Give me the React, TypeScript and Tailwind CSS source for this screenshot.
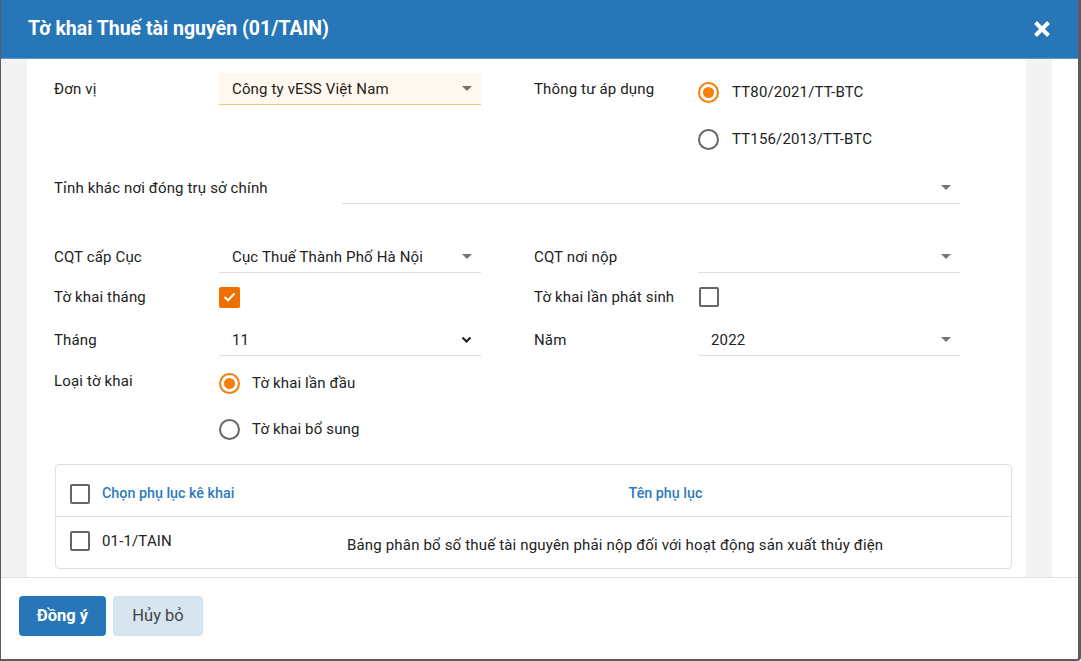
import React from "react";

const Caret = () => (
  <svg width="10" height="6" viewBox="0 0 10 6" className="shrink-0">
    <path d="M0 0 L10 0 L5 5 Z" fill="#757575" />
  </svg>
);

const Chevron = () => (
  <svg width="11" height="8" viewBox="0 0 11 8" className="shrink-0">
    <path d="M1.5 1.5 L5.5 5.5 L9.5 1.5" stroke="#222" strokeWidth="2.2" fill="none" />
  </svg>
);

const Radio = ({ checked }: { checked?: boolean }) => (
  <span
    className={`flex h-[21px] w-[21px] shrink-0 items-center justify-center rounded-full border-2 ${
      checked ? "border-[#f57f0a]" : "border-[#666]"
    }`}
  >
    {checked && <span className="h-[11px] w-[11px] rounded-full bg-[#f57f0a]" />}
  </span>
);

const Checkbox = ({ checked }: { checked?: boolean }) =>
  checked ? (
    <span className="flex h-[21px] w-[21px] shrink-0 items-center justify-center rounded-[2px] bg-[#ef7000]">
      <svg width="13" height="10" viewBox="0 0 13 10">
        <path d="M1.5 5 L5 8.3 L11.5 1.5" stroke="white" strokeWidth="2" fill="none" />
      </svg>
    </span>
  ) : (
    <span className="h-[20px] w-[20px] shrink-0 rounded-[2px] border-2 border-[#666]" />
  );

const Select = ({
  value,
  w = "w-[262px]",
  chevron,
  active,
}: {
  value?: string;
  w?: string;
  chevron?: boolean;
  active?: boolean;
}) => (
  <div
    className={`flex h-[32px] ${w} items-center justify-between border-b pl-[13px] pr-[9px] ${
      active ? "border-[#f5c880] bg-[#fff8ef]" : "border-[#dedede]"
    }`}
  >
    <span className="mt-[2px]">{value}</span>
    {chevron ? <Chevron /> : <Caret />}
  </div>
);

export default function App() {
  return (
    <div
      className="flex h-[661px] w-[1081px] flex-col overflow-hidden rounded-br-[4px] border-b-2 border-l border-r-[3px] border-[#5c5c5c] bg-white text-[15px] tracking-[0.15px] text-[#222]"
      style={{ fontFamily: "Roboto, 'Noto Sans', sans-serif" }}
    >
      {/* Header */}
      <div className="flex h-[59px] shrink-0 items-center justify-between border-b border-[#5a9bd0] bg-[#2776b7] pl-[27px] pr-[27px]">
        <h1 className="text-[19.5px] font-bold tracking-normal text-white">Tờ khai Thuế tài nguyên (01/TAIN)</h1>
        <svg width="18" height="18" viewBox="0 0 18 18">
          <path d="M2.5 2.5 L15.5 15.5 M15.5 2.5 L2.5 15.5" stroke="white" strokeWidth="4" strokeLinecap="butt" />
        </svg>
      </div>

      {/* Body */}
      <div className="flex h-[519px] shrink-0 border-b border-[#e2e2e2]">
        <div className="w-[26px] shrink-0 bg-[#f3f3f3]" />
        <div className="flex-1 overflow-hidden rounded-t-[4px] bg-white pt-[14px]">
          {/* Row 1 */}
          <div className="flex pl-[27px]">
            <div className="flex h-[32px] w-[165px] items-center pt-[1px]">Đơn vị</div>
            <Select value="Công ty vESS Việt Nam" active />
            <div className="ml-[53px] flex h-[32px] w-[164px] items-center pt-[1px]">Thông tư áp dụng</div>
            <div className="flex flex-col gap-[9px]">
              <div className="flex h-[38px] items-center gap-[13px]">
                <Radio checked />
                <span>TT80/2021/TT-BTC</span>
              </div>
              <div className="flex h-[38px] items-center gap-[13px]">
                <Radio />
                <span>TT156/2013/TT-BTC</span>
              </div>
            </div>
          </div>

          {/* Row 2 */}
          <div className="mt-[14px] flex pl-[27px]">
            <div className="flex h-[32px] w-[288px] items-center">Tỉnh khác nơi đóng trụ sở chính</div>
            <Select w="w-[618px]" />
          </div>

          {/* Row 3 */}
          <div className="mt-[37px] flex pl-[27px]">
            <div className="flex h-[32px] w-[165px] items-center">CQT cấp Cục</div>
            <Select value="Cục Thuế Thành Phố Hà Nội" />
            <div className="ml-[53px] flex h-[32px] w-[164px] items-center">CQT nơi nộp</div>
            <Select />
          </div>

          {/* Row 4 */}
          <div className="mt-[8px] flex h-[32px] items-center pl-[27px]">
            <div className="w-[165px]">Tờ khai tháng</div>
            <div className="flex w-[262px] items-center">
              <Checkbox checked />
            </div>
            <div className="ml-[53px] w-[165px]">Tờ khai lần phát sinh</div>
            <Checkbox />
          </div>

          {/* Row 5 */}
          <div className="mt-[11px] flex pl-[27px]">
            <div className="flex h-[32px] w-[165px] items-center">Tháng</div>
            <Select value="11" chevron />
            <div className="ml-[53px] flex h-[32px] w-[164px] items-center">Năm</div>
            <Select value="2022" />
          </div>

          {/* Row 6 */}
          <div className="mt-[8px] flex pl-[27px]">
            <div className="flex h-[34px] w-[165px] items-center">Loại tờ khai</div>
            <div className="flex flex-col gap-[8px]">
              <div className="flex h-[38px] items-center gap-[12px]">
                <Radio checked />
                <span>Tờ khai lần đầu</span>
              </div>
              <div className="flex h-[38px] items-center gap-[12px]">
                <Radio />
                <span>Tờ khai bổ sung</span>
              </div>
            </div>
          </div>

          {/* Table */}
          <div className="ml-[28px] mt-[16px] w-[957px] rounded-[4px] border border-[#e0e0e0]">
            <div className="flex h-[52px] items-center border-b border-[#e0e0e0] pt-[6px]">
              <div className="flex w-[264px] items-center gap-[12px] pl-[14px]">
                <Checkbox />
                <span className="text-[14.3px] font-medium tracking-normal text-[#2d7bbd]">Chọn phụ lục kê khai</span>
              </div>
              <div className="flex-1 text-center text-[14.3px] font-medium tracking-normal text-[#2d7bbd]">Tên phụ lục</div>
            </div>
            <div className="flex h-[51px] items-start pt-[13px]">
              <div className="flex w-[264px] items-center gap-[12px] pl-[14px]">
                <Checkbox />
                <span>01-1/TAIN</span>
              </div>
              <div className="pl-[27px] pt-[4px] text-[15px] tracking-[0.17px]">
                Bảng phân bổ số thuế tài nguyên phải nộp đối với hoạt động sản xuất thủy điện
              </div>
            </div>
          </div>
        </div>
        <div className="w-[26px] shrink-0 bg-[#f3f3f3]" />
        <div className="w-[26px] shrink-0 bg-white" />
      </div>

      {/* Footer */}
      <div className="flex gap-[7px] pl-[18px] pt-[18px]">
        <button className="h-[40px] w-[87px] rounded-[4px] bg-[#2776b7] text-[16.5px] font-bold tracking-normal text-white">
          Đồng ý
        </button>
        <button className="h-[40px] w-[90px] rounded-[4px] border border-[#d0dfec] bg-[#d7e5f1] text-[16.5px] tracking-normal text-[#444]">
          Hủy bỏ
        </button>
      </div>
    </div>
  );
}
